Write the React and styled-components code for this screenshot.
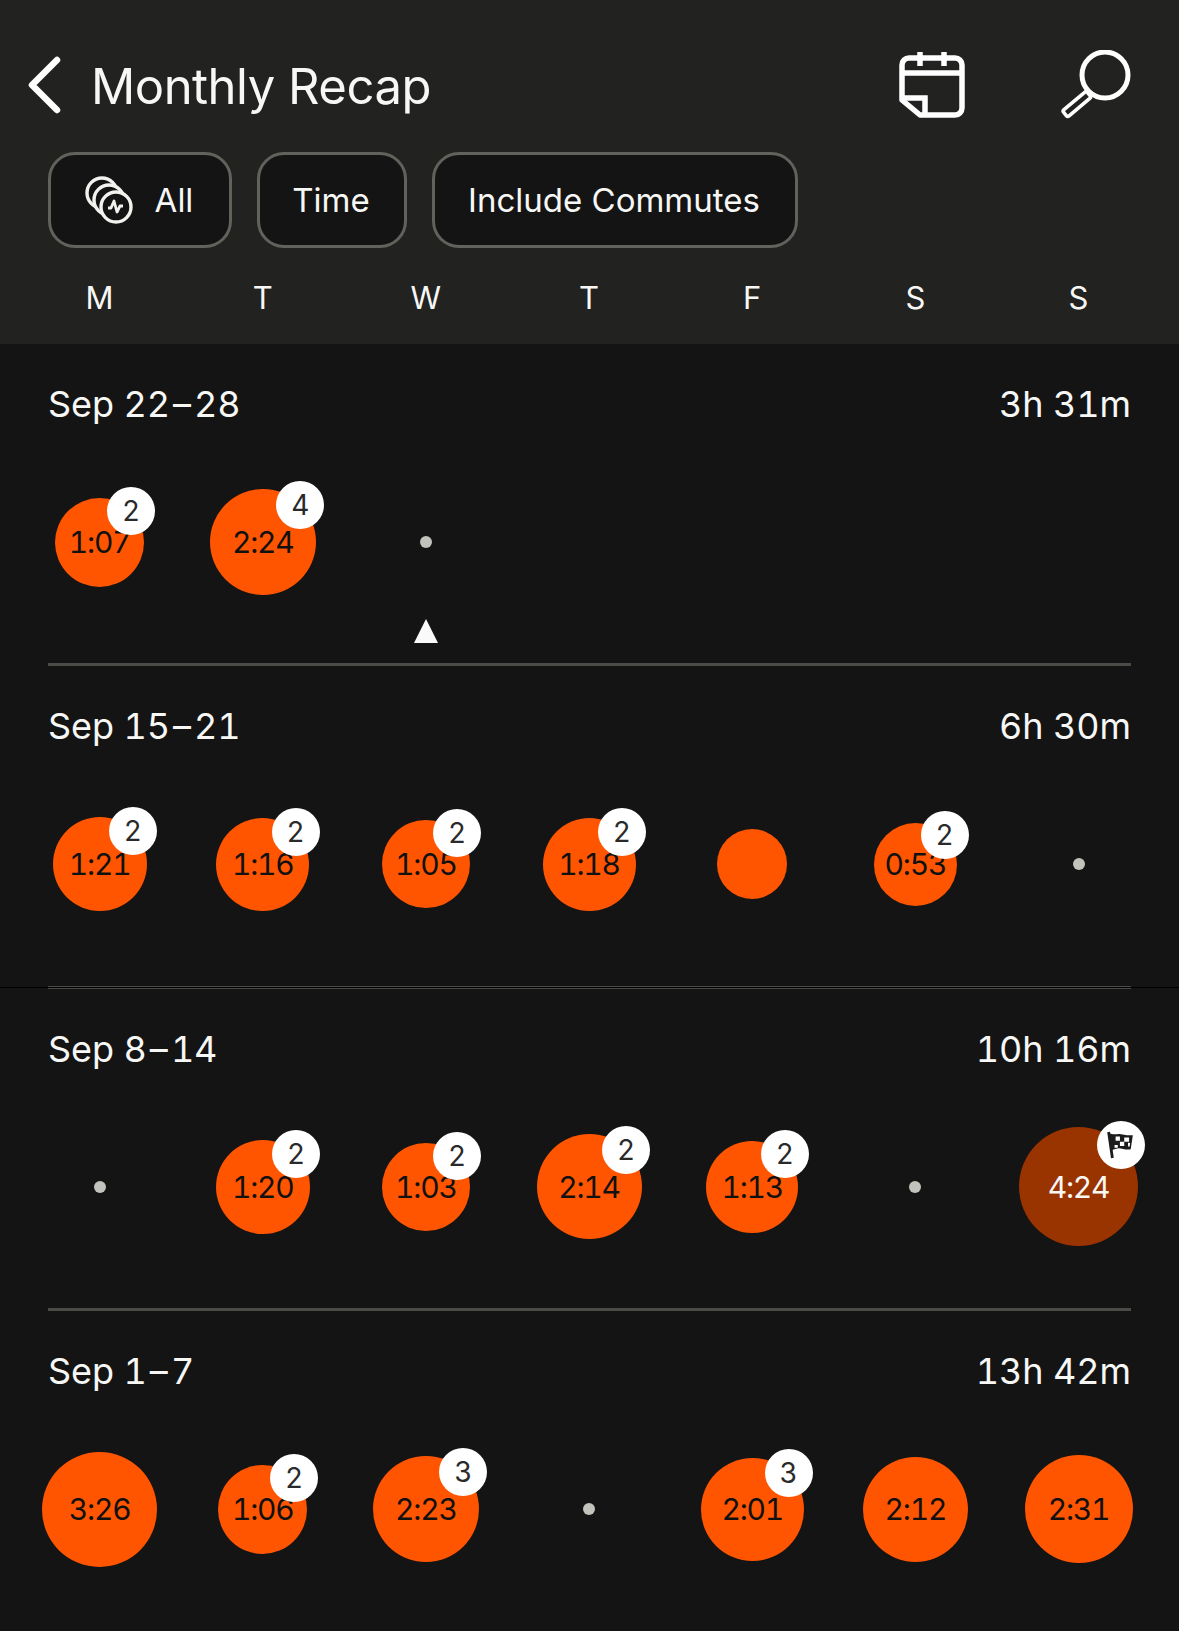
import React from 'react';
import styled, { createGlobalStyle } from 'styled-components';

const GlobalStyle = createGlobalStyle`
  html, body { margin: 0; padding: 0; background: #141414; }
  body { font-family: "Inter", "Liberation Sans", sans-serif; color: #f7f7f5; }
`;

const Page = styled.div`
  width: 1179px;
  height: 1631px;
  overflow: hidden;
  background: #141414;
`;

const Header = styled.header`
  height: 344px;
  box-sizing: border-box;
  background: #222220;
  padding-top: 49px;
`;

const TopBar = styled.div`
  display: flex;
  align-items: center;
  height: 72px;
  padding: 0 48px 0 27px;
`;

const Title = styled.h1`
  flex: 1;
  margin: 2px 0 0 30px;
  font-size: 49px;
  font-weight: 400;
  letter-spacing: -0.5px;
`;

const SearchSlot = styled.div`
  margin-left: 96px;
  display: flex;
`;

const Pills = styled.div`
  display: flex;
  gap: 25px;
  margin-top: 31px;
  padding-left: 48px;
`;

const Pill = styled.div`
  display: flex;
  align-items: center;
  justify-content: center;
  gap: 22px;
  box-sizing: border-box;
  width: ${({ $w }) => $w}px;
  height: 96px;
  padding-right: 2px;
  border: 3px solid #62625c;
  border-radius: 27px;
  background: #141414;
  font-size: 33px;
`;

const DayGrid = styled.div`
  display: grid;
  grid-template-columns: repeat(7, 163.17px);
  padding-left: 18px;
`;

const Weekdays = styled(DayGrid)`
  margin-top: 30px;
  font-size: 31px;
  line-height: 40px;
  text-align: center;
`;

const Week = styled.section`
  position: relative;
  height: 322.4px;
  display: flex;
  flex-direction: column;
`;

const Seam = styled.div`
  position: absolute;
  top: -2px;
  left: 0;
  right: 0;
  height: 1px;
  background: #000;
`;

const WeekHead = styled.div`
  display: flex;
  justify-content: space-between;
  padding: 36px 48px 0;
  font-size: 36px;
  font-variant-numeric: tabular-nums;
  line-height: 48px;
  letter-spacing: -0.1px;
`;

const Days = styled(DayGrid)`
  align-items: center;
  margin-top: 54px;
`;

const Cell = styled.div`
  position: relative;
  display: flex;
  align-items: center;
  justify-content: center;
  height: 120px;
`;

const Bubble = styled.div`
  position: relative;
  flex: none;
  display: flex;
  align-items: center;
  justify-content: center;
  width: ${({ $d }) => $d}px;
  height: ${({ $d }) => $d}px;
  border-radius: 50%;
  background: ${({ $race }) => ($race ? '#993300' : '#ff5500')};
  color: ${({ $race }) => ($race ? '#f7f7f5' : '#111')};
  font-size: 30px;
  font-variant-numeric: tabular-nums;
  letter-spacing: -1.2px;
`;

const Badge = styled.div`
  position: absolute;
  left: 85.35%;
  top: 14.65%;
  transform: translate(-50%, -50%);
  display: flex;
  align-items: center;
  justify-content: center;
  width: 48px;
  height: 48px;
  border-radius: 50%;
  background: #fff;
  color: #2a2a2a;
  font-size: 28px;
  letter-spacing: 0;
`;

const Dot = styled.div`
  width: 12px;
  height: 12px;
  border-radius: 50%;
  background: #c3c3bd;
`;

const Pointer = styled.div`
  position: absolute;
  left: 50%;
  top: 137px;
  transform: translateX(-50%);
  width: 0;
  height: 0;
  border-left: 12px solid transparent;
  border-right: 12px solid transparent;
  border-bottom: 24px solid #fafafa;
`;

const Divider = styled.div`
  height: 3px;
  margin: auto 48px 0;
  background: #4a4a46;
`;

const weeks = [
  {
    label: 'Sep 22\u200a–\u200a28',
    total: '3h 31m',
    days: [
      { t: '1:07', d: 89, b: 2 },
      { t: '2:24', d: 106, b: 4 },
      { pointer: true },
    ],
  },
  {
    label: 'Sep 15\u200a–\u200a21',
    total: '6h 30m',
    days: [
      { t: '1:21', d: 94, b: 2 },
      { t: '1:16', d: 93, b: 2 },
      { t: '1:05', d: 88, b: 2 },
      { t: '1:18', d: 93, b: 2 },
      { t: '', d: 70 },
      { t: '0:53', d: 83, b: 2 },
      {},
    ],
  },
  {
    label: 'Sep 8\u200a–\u200a14',
    total: '10h 16m',
    seam: true,
    days: [
      {},
      { t: '1:20', d: 94, b: 2 },
      { t: '1:03', d: 88, b: 2 },
      { t: '2:14', d: 105, b: 2 },
      { t: '1:13', d: 92, b: 2 },
      {},
      { t: '4:24', d: 119, race: true },
    ],
  },
  {
    label: 'Sep 1\u200a–\u200a7',
    total: '13h 42m',
    days: [
      { t: '3:26', d: 115 },
      { t: '1:06', d: 89, b: 2 },
      { t: '2:23', d: 106, b: 3 },
      {},
      { t: '2:01', d: 103, b: 3 },
      { t: '2:12', d: 105 },
      { t: '2:31', d: 108 },
    ],
  },
];

function BackIcon() {
  return (
    <svg width="34" height="58" viewBox="0 0 34 58" fill="none">
      <path d="M30 4 5 29l25 25" stroke="#fff" strokeWidth="6.5" strokeLinecap="round" strokeLinejoin="round" />
    </svg>
  );
}

function CalendarIcon() {
  return (
    <svg width="66" height="66" viewBox="0 0 66 66" fill="none" stroke="#fff" strokeWidth="5.5">
      <path d="M10 6h46a7 7 0 0 1 7 7v43a7 7 0 0 1-7 7H21L3 48V13a7 7 0 0 1 7-7Z" strokeLinejoin="round" />
      <path d="M3 21h60M21 0v14M45 0v14M3 46h23v17" />
    </svg>
  );
}

function SearchIcon() {
  return (
    <svg width="70" height="70" viewBox="0 0 70 70" fill="none" stroke="#fff" strokeWidth="5">
      <circle cx="44" cy="25" r="23" />
      <rect x="0" y="-4" width="31" height="8" rx="2" transform="translate(4 64) rotate(-40)" strokeWidth="3.6" />
    </svg>
  );
}

function ActivityIcon() {
  return (
    <svg width="48" height="48" viewBox="0 0 48 48" fill="#141414" stroke="#f2f2ef" strokeWidth="3.4">
      <circle cx="17" cy="17" r="15" />
      <circle cx="24" cy="24" r="15" />
      <circle cx="31" cy="31" r="15" />
      <path d="M23 32h3l3-7 3 11 3-6h3" fill="none" strokeWidth="2.8" strokeLinejoin="round" />
    </svg>
  );
}

function FlagIcon() {
  return (
    <svg width="28" height="28" viewBox="0 0 26 26">
      <path d="M1.500 1 5 25" stroke="#1c1c1c" strokeWidth="2.6" fill="none" />
      <path d="M2 2c5 2 8 0 11 1 4 1 7 1 11 1l-2 13c-4 1-8-1-11-1-2 0-4 1-7 2Z" fill="#1c1c1c" />
      <path d="M8 5h4v4H8ZM16 6h4.500v4H16ZM12 10h4v4h-4ZM19.500 11l2 .2-.5 3.300h-1.500ZM7 13h3v2.500H7Z" fill="#fff" />
    </svg>
  );
}

function Day({ day }) {
  if (!day.d) {
    return (
      <Cell>
        <Dot />
        {day.pointer && <Pointer />}
      </Cell>
    );
  }
  return (
    <Cell>
      <Bubble $d={day.d} $race={day.race}>
        {day.t}
        {day.b && <Badge>{day.b}</Badge>}
        {day.race && <Badge><FlagIcon /></Badge>}
      </Bubble>
    </Cell>
  );
}

export default function App() {
  return (
    <Page>
      <GlobalStyle />
      <Header>
        <TopBar>
          <BackIcon />
          <Title>Monthly Recap</Title>
          <CalendarIcon />
          <SearchSlot><SearchIcon /></SearchSlot>
        </TopBar>
        <Pills>
          <Pill $w={184}><ActivityIcon />All</Pill>
          <Pill $w={150}>Time</Pill>
          <Pill $w={366}>Include Commutes</Pill>
        </Pills>
        <Weekdays>
          {['M', 'T', 'W', 'T', 'F', 'S', 'S'].map((d, i) => <div key={i}>{d}</div>)}
        </Weekdays>
      </Header>
      {weeks.map((w) => (
        <Week key={w.label}>
          {w.seam && <Seam />}
          <WeekHead>
            <span>{w.label}</span>
            <span>{w.total}</span>
          </WeekHead>
          <Days>
            {w.days.map((day, i) => <Day key={i} day={day} />)}
          </Days>
          <Divider />
        </Week>
      ))}
    </Page>
  );
}
